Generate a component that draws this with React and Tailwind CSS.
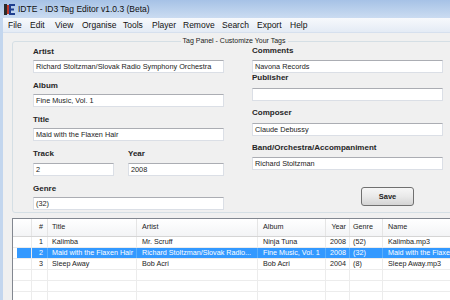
import React from "react";

// menu items with the widths they take in the menu strip
const menus = [
  ["File", "w-[22px]"],
  ["Edit", "w-[25px]"],
  ["View", "w-[27px]"],
  ["Organise", "w-[41px]"],
  ["Tools", "w-[29px]"],
  ["Player", "w-[31px]"],
  ["Remove", "w-[39px]"],
  ["Search", "w-[35px]"],
  ["Export", "w-[33px]"],
  ["Help", "w-[30px]"],
];

const rows = [
  { n: 1, title: "Kalimba", artist: "Mr. Scruff", album: "Ninja Tuna", year: "2008", genre: "(52)", name: "Kalimba.mp3" },
  { n: 2, title: "Maid with the Flaxen Hair", artist: "Richard Stoltzman/Slovak Radio...", album: "Fine Music, Vol. 1", year: "2008", genre: "(32)", name: "Maid with the Flaxen Hair.mp3", sel: true },
  { n: 3, title: "Sleep Away", artist: "Bob Acri", album: "Bob Acri", year: "2004", genre: "(8)", name: "Sleep Away.mp3" },
  {},
  {},
  {},
];

const Label = ({ children, className = "" }) => (
  <div className={`h-[10px] leading-[10px] text-[8px] font-bold text-[#262626] ${className}`}>{children}</div>
);

const Field = ({ value, className = "" }) => (
  <div
    className={`h-[13px] bg-white border border-[#dbdfe6] border-t-[#abadb3] pl-[2px] text-[7.3px] leading-[11px] text-[#222] whitespace-nowrap overflow-hidden ${className}`}
  >
    {value}
  </div>
);

// column widths for the list view
const cols = "grid grid-cols-[19px_16px_89px_121px_68px_24px_33px_100px]";

const AppIcon = () => (
  <svg width="11" height="11" viewBox="0 0 11 11">
    <rect x="0" y="0" width="3" height="11" fill="#2b2b2b" />
    <rect x="3" y="1" width="2" height="9" fill="#c0392b" />
    <rect x="5" y="0" width="2" height="11" fill="#1f3f8f" />
    <rect x="7" y="0" width="4" height="2" fill="#1f3f8f" />
    <rect x="7" y="4.5" width="3" height="2" fill="#1f3f8f" />
    <rect x="7" y="9" width="4" height="2" fill="#1f3f8f" />
  </svg>
);

export default function App() {
  return (
    <div
      className="w-[450px] h-[300px] overflow-hidden flex flex-col bg-[#b8cfec]"
      style={{ fontFamily: '"Liberation Sans", Arial, sans-serif' }}
    >
      {/* title bar */}
      <div className="h-[18px] flex items-center pl-[4px] gap-[3px] bg-gradient-to-b from-[#a6c2e6] to-[#cbdcf1]">
        <AppIcon />
        <span className="text-[8.5px] text-[#111]">IDTE - ID3 Tag Editor v1.0.3 (Beta)</span>
      </div>

      <div className="flex flex-1 min-h-0">
        <div className="w-[3px] bg-[#c3d6ee]" />
        <div className="flex-1 flex flex-col min-w-0">
          {/* menu */}
          <div className="h-[15px] flex items-center pl-[5px] bg-gradient-to-b from-[#f7f9fc] to-[#e4ebf5] border-b border-[#d6e0ee] text-[8.5px] text-[#111]">
            {menus.map(([m, w]) => (
              <span key={m} className={`${w} shrink-0`}>{m}</span>
            ))}
          </div>

          {/* body */}
          <div className="flex-1 bg-[#f0f0f0] pl-[9px] pt-[8px] overflow-hidden">
            {/* group box */}
            <div className="relative w-[444px] h-[172px] border border-[#d5dfe5] rounded-[3px] flex">
              <div className="absolute left-0 right-0 -top-[6px] flex justify-center">
                <span className="bg-[#f0f0f0] px-[2px] text-[7px] leading-[10px] text-[#222]">
                  Tag Panel - Customize Your Tags
                </span>
              </div>

              {/* left column */}
              <div className="ml-[20px] w-[191px] pt-[5px] flex flex-col shrink-0">
                <Label>Artist</Label>
                <Field className="mt-[3px]" value="Richard Stoltzman/Slovak Radio Symphony Orchestra" />
                <Label className="mt-[8px]">Album</Label>
                <Field className="mt-[3px]" value="Fine Music, Vol. 1" />
                <Label className="mt-[8px]">Title</Label>
                <Field className="mt-[3px]" value="Maid with the Flaxen Hair" />
                <div className="mt-[8px] flex">
                  <div className="w-[81px]">
                    <Label>Track</Label>
                    <Field className="mt-[4px]" value="2" />
                  </div>
                  <div className="ml-[14px] flex-1">
                    <Label>Year</Label>
                    <Field className="mt-[4px]" value="2008" />
                  </div>
                </div>
                <Label className="mt-[8px]">Genre</Label>
                <Field className="mt-[3px]" value="(32)" />
              </div>

              {/* right column */}
              <div className="ml-[28px] w-[191px] pt-[4px] flex flex-col shrink-0">
                <Label>Comments</Label>
                <Field className="mt-[4px]" value="Navona Records" />
                <Label>Publisher</Label>
                <Field className="mt-[5px]" value="" />
                <Label className="mt-[7px]">Composer</Label>
                <Field className="mt-[5px]" value="Claude Debussy" />
                <Label className="mt-[7px]">Band/Orchestra/Accompaniment</Label>
                <Field className="mt-[4px]" value="Richard Stoltzman" />
                <button className="mt-[17px] ml-[109px] w-[53px] h-[19px] rounded-[3px] border border-[#707070] bg-gradient-to-b from-[#f6f6f6] via-[#e9e9e9] to-[#d4d4d4] text-[7.5px] font-bold text-[#222]">
                  Save
                </button>
              </div>
            </div>

            {/* list view */}
            <div className="mt-[5px] w-[480px] h-[100px] bg-white border border-[#828790] text-[7.2px] text-[#222]">
              <div className={`${cols} h-[18px] items-center bg-gradient-to-b from-white to-[#f3f4f6] border-b border-[#d5d5d5]`}>
                <div className="h-full border-r border-[#e5e5e5]" />
                <div className="h-full border-r border-[#e5e5e5] flex items-center justify-end pr-[4px]">#</div>
                <div className="h-full border-r border-[#e5e5e5] flex items-center pl-[4px]">Title</div>
                <div className="h-full border-r border-[#e5e5e5] flex items-center pl-[5px]">Artist</div>
                <div className="h-full border-r border-[#e5e5e5] flex items-center pl-[5px]">Album</div>
                <div className="h-full border-r border-[#e5e5e5] flex items-center justify-end pr-[3px]">Year</div>
                <div className="h-full border-r border-[#e5e5e5] flex items-center pl-[3px]">Genre</div>
                <div className="h-full flex items-center pl-[5px]">Name</div>
              </div>
              {rows.map((r, i) => {
                const sel = r.sel ? "bg-[#3399ff] text-white" : "";
                const cell = `h-full border-r ${r.sel ? "border-[#5aaefc]" : "border-[#ececec]"} flex items-center whitespace-nowrap overflow-hidden ${sel}`;
                return (
                  <div key={i} className={`${cols} h-[11px] border-b border-[#ececec]`}>
                    <div className="h-full border-r border-[#ececec] flex">
                      <div className="w-[4px]" />
                      {r.sel && <div className="flex-1 bg-[#3399ff]" />}
                    </div>
                    <div className={`${cell} justify-end pr-[4px]`}>{r.n}</div>
                    <div className={`${cell} pl-[4px]`}>{r.title}</div>
                    <div className={`${cell} pl-[5px]`}>{r.artist}</div>
                    <div className={`${cell} pl-[5px]`}>{r.album}</div>
                    <div className={`${cell} justify-end pr-[3px]`}>{r.year}</div>
                    <div className={`${cell} pl-[3px]`}>{r.genre}</div>
                    <div className={`${cell} pl-[5px] border-r-0`}>{r.name}</div>
                  </div>
                );
              })}
            </div>
          </div>
        </div>
      </div>
    </div>
  );
}
